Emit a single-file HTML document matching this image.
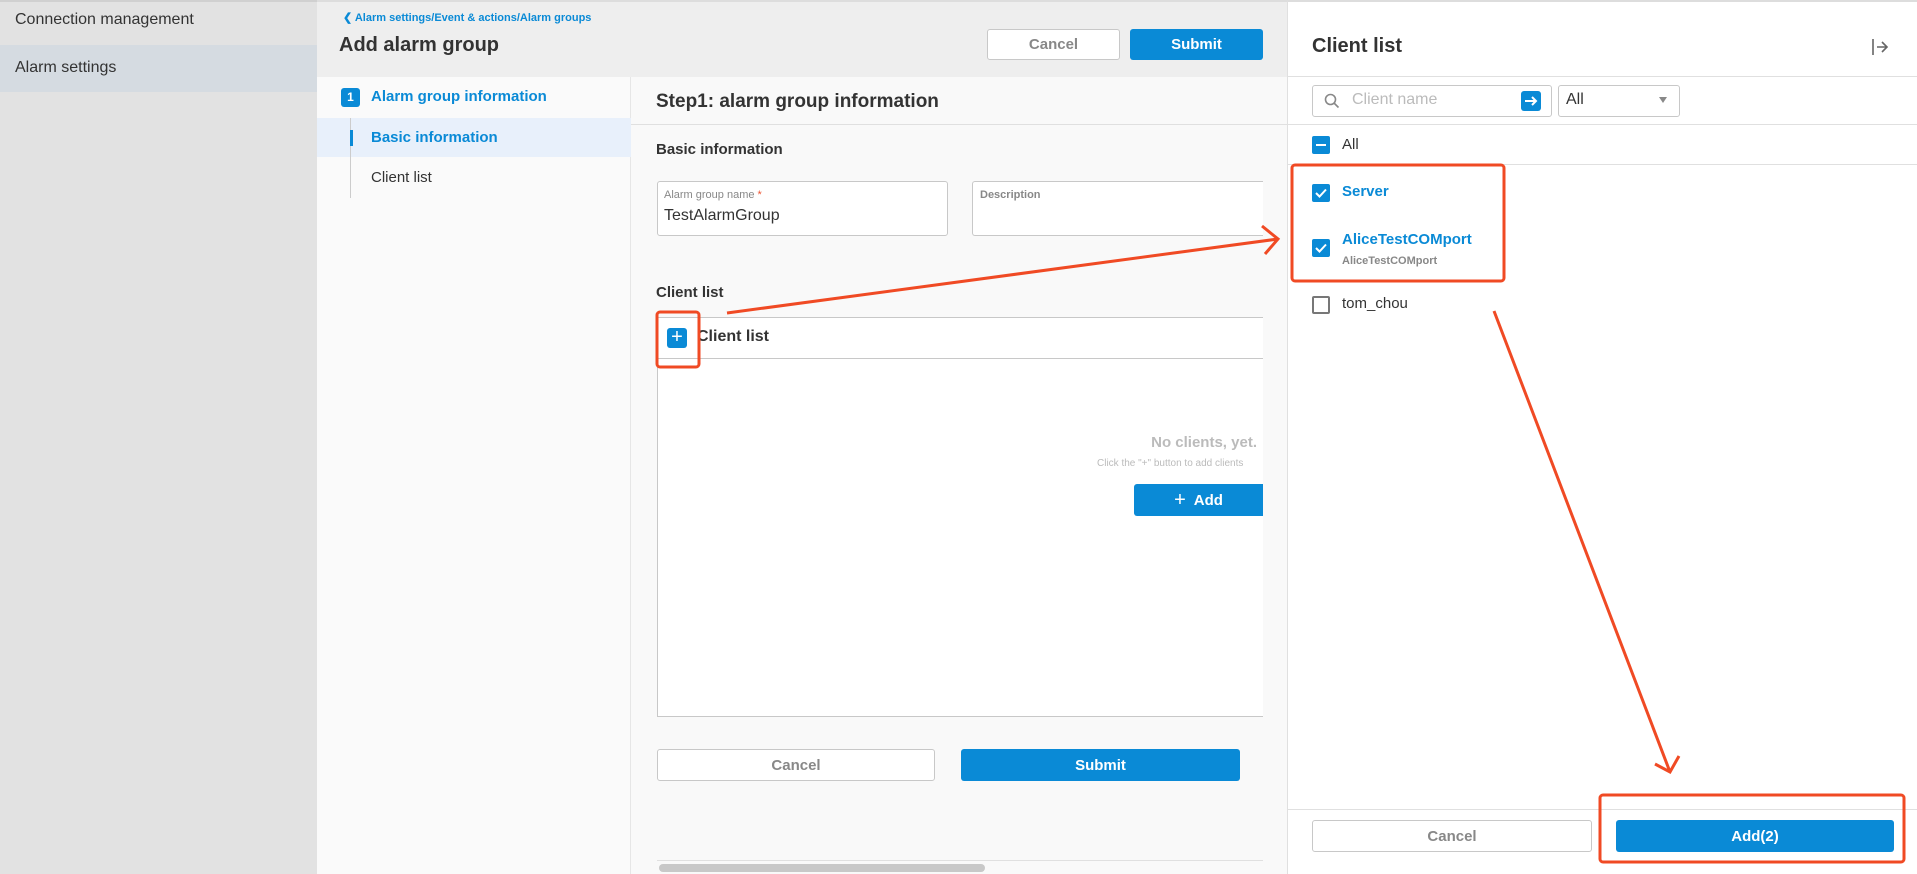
<!DOCTYPE html>
<html><head><meta charset="utf-8">
<style>
*{box-sizing:border-box;margin:0;padding:0}
body{width:1917px;height:874px;overflow:hidden;position:relative;font-family:"Liberation Sans",sans-serif;background:#f9f9f9;color:#333}
.abs{position:absolute}
.btn{position:absolute;border-radius:3px;font-size:15px;font-weight:bold;display:flex;align-items:center;justify-content:center}
.bw{background:#fff;border:1px solid #c8c8c8;color:#888}
.bb{background:#0a8ad6;color:#fff}
.cb{position:absolute;width:18px;height:18px;border-radius:2px;background:#0a8ad6}
</style></head><body>
<!-- sidebar -->
<div class="abs" style="left:0;top:0;width:317px;height:874px;background:#e2e2e2;border-top:2px solid #d0d0d0"></div>
<div class="abs" style="left:15px;top:11px;font-size:16px;color:#333">Connection management</div>
<div class="abs" style="left:0;top:45px;width:317px;height:47px;background:#d5dbe1"></div>
<div class="abs" style="left:15px;top:59px;font-size:16px;color:#333">Alarm settings</div>
<!-- header -->
<div class="abs" style="left:317px;top:0;width:970px;height:77px;background:#eeeeee;border-top:2px solid #ddd"></div>
<div class="abs" style="left:343px;top:11px;font-size:11px;font-weight:bold;color:#0a8ad6">&#10094; Alarm settings/Event &amp; actions/Alarm groups</div>
<div class="abs" style="left:339px;top:34px;font-size:20px;font-weight:bold;color:#333">Add alarm group</div>
<div class="btn bw" style="left:987px;top:29px;width:133px;height:31px">Cancel</div>
<div class="btn bb" style="left:1130px;top:29px;width:133px;height:31px">Submit</div>
<!-- steps -->
<div class="abs" style="left:317px;top:77px;width:314px;height:797px;background:#fafafa;border-right:1px solid #e6e6e6"></div>
<div class="abs" style="left:341px;top:88px;width:19px;height:19px;background:#0a8ad6;border-radius:3px;color:#fff;font-size:12px;font-weight:bold;text-align:center;line-height:19px">1</div>
<div class="abs" style="left:371px;top:88px;font-size:15px;font-weight:bold;color:#0a8ad6">Alarm group information</div>
<div class="abs" style="left:317px;top:118px;width:314px;height:39px;background:#e8f0fb"></div>
<div class="abs" style="left:350px;top:118px;width:1px;height:80px;background:#ccc"></div>
<div class="abs" style="left:350px;top:130px;width:3px;height:16px;background:#0a8ad6"></div>
<div class="abs" style="left:371px;top:129px;font-size:15px;font-weight:bold;color:#0a8ad6">Basic information</div>
<div class="abs" style="left:371px;top:169px;font-size:15px;color:#333">Client list</div>
<!-- content -->
<div class="abs" style="left:656px;top:91px;font-size:19px;font-weight:bold;color:#333">Step1: alarm group information</div>
<div class="abs" style="left:631px;top:124px;width:656px;height:1px;background:#e0e0e0"></div>
<div class="abs" style="left:656px;top:141px;font-size:15px;font-weight:bold;color:#333">Basic information</div>
<div class="abs" style="left:657px;top:181px;width:291px;height:55px;background:#fff;border:1px solid #c8c8c8;border-radius:3px"></div>
<div class="abs" style="left:664px;top:189px;font-size:11px;color:#888">Alarm group name <span style="color:#e53">*</span></div>
<div class="abs" style="left:664px;top:207px;font-size:16px;color:#333">TestAlarmGroup</div>
<div class="abs" style="left:972px;top:181px;width:291px;height:55px;background:#fff;border:1px solid #c8c8c8;border-right:none;border-radius:3px 0 0 3px"></div>
<div class="abs" style="left:980px;top:189px;font-size:11px;font-weight:bold;color:#888">Description</div>
<div class="abs" style="left:656px;top:284px;font-size:15px;font-weight:bold;color:#333">Client list</div>
<div class="abs" style="left:657px;top:317px;width:606px;height:400px;background:#fff;border:1px solid #c8c8c8;border-right:none"></div>
<div class="abs" style="left:657px;top:358px;width:606px;height:1px;background:#c8c8c8"></div>
<div class="abs" style="left:667px;top:328px;width:20px;height:20px;background:#0a8ad6;border-radius:3px;color:#fff;font-size:20px;line-height:19px;text-align:center">+</div>
<div class="abs" style="left:697px;top:328px;font-size:16px;font-weight:bold;color:#333">Client list</div>
<div class="abs" style="left:657px;top:434px;width:600px;text-align:right;font-size:15px;font-weight:bold;color:#bbb;overflow:hidden">No clients, yet.</div>
<div class="abs" style="left:1097px;top:458px;width:166px;font-size:10px;color:#bbb;white-space:nowrap;overflow:hidden">Click the "+" button to add clients</div>
<div class="btn bb" style="left:1134px;top:484px;width:129px;height:32px;border-radius:3px 0 0 3px"><span style="font-size:20px;font-weight:normal;margin-right:8px">+</span>Add</div>
<div class="btn bw" style="left:657px;top:749px;width:278px;height:32px">Cancel</div>
<div class="btn bb" style="left:961px;top:749px;width:279px;height:32px">Submit</div>
<div class="abs" style="left:657px;top:860px;width:606px;height:1px;background:#e0e0e0"></div>
<div class="abs" style="left:659px;top:864px;width:326px;height:8px;background:#c8c8c8;border-radius:4px"></div>
<!-- right panel -->
<div class="abs" style="left:1287px;top:0;width:630px;height:874px;background:#fff;border-left:1px solid #e0e0e0;border-top:2px solid #ddd"></div>
<div class="abs" style="left:1312px;top:35px;font-size:20px;font-weight:bold;color:#333">Client list</div>
<svg class="abs" style="left:1870px;top:37px" width="20" height="20" viewBox="0 0 20 20"><path d="M3 2v16M7 10h10M12 5l5 5-5 5" stroke="#666" stroke-width="1.6" fill="none"/></svg>
<div class="abs" style="left:1288px;top:76px;width:629px;height:1px;background:#e0e0e0"></div>
<div class="abs" style="left:1312px;top:85px;width:240px;height:32px;border:1px solid #c8c8c8;border-radius:3px"></div>
<svg class="abs" style="left:1323px;top:92px" width="18" height="18" viewBox="0 0 18 18"><circle cx="7.5" cy="7.5" r="5" stroke="#888" stroke-width="1.6" fill="none"/><path d="M11 11l4.5 4.5" stroke="#888" stroke-width="1.6"/></svg>
<div class="abs" style="left:1352px;top:91px;font-size:16px;color:#bbb">Client name</div>
<div class="abs" style="left:1521px;top:91px;width:20px;height:20px;background:#0a8ad6;border-radius:3px"></div>
<svg class="abs" style="left:1521px;top:91px" width="20" height="20" viewBox="0 0 20 20"><path d="M4 10h11M11 6l4 4-4 4" stroke="#fff" stroke-width="2" fill="none"/></svg>
<div class="abs" style="left:1558px;top:85px;width:122px;height:32px;border:1px solid #c8c8c8;border-radius:3px"></div>
<div class="abs" style="left:1566px;top:91px;font-size:16px;color:#333">All</div>
<div class="abs" style="left:1659px;top:97px;width:0;height:0;border-left:4px solid transparent;border-right:4px solid transparent;border-top:6px solid #888"></div>
<div class="abs" style="left:1288px;top:124px;width:629px;height:1px;background:#e0e0e0"></div>
<div class="cb" style="left:1312px;top:136px"></div><div class="abs" style="left:1316px;top:144px;width:10px;height:2px;background:#fff"></div>
<div class="abs" style="left:1342px;top:136px;font-size:15px;color:#333">All</div>
<div class="abs" style="left:1288px;top:164px;width:629px;height:1px;background:#e0e0e0"></div>
<div class="cb" style="left:1312px;top:184px"></div>
<svg class="abs" style="left:1312px;top:184px" width="18" height="18" viewBox="0 0 18 18"><path d="M4 9l3.5 3.5L14 5.5" stroke="#fff" stroke-width="2" fill="none"/></svg>
<div class="abs" style="left:1342px;top:183px;font-size:15px;font-weight:bold;color:#0a8ad6">Server</div>
<div class="cb" style="left:1312px;top:239px"></div>
<svg class="abs" style="left:1312px;top:239px" width="18" height="18" viewBox="0 0 18 18"><path d="M4 9l3.5 3.5L14 5.5" stroke="#fff" stroke-width="2" fill="none"/></svg>
<div class="abs" style="left:1342px;top:231px;font-size:15px;font-weight:bold;color:#0a8ad6">AliceTestCOMport</div>
<div class="abs" style="left:1342px;top:255px;font-size:11px;font-weight:bold;color:#888">AliceTestCOMport</div>
<div class="abs" style="left:1312px;top:296px;width:18px;height:18px;border:2px solid #777;border-radius:2px"></div>
<div class="abs" style="left:1342px;top:295px;font-size:15px;color:#333">tom_chou</div>
<div class="abs" style="left:1288px;top:809px;width:629px;height:1px;background:#e0e0e0"></div>
<div class="btn bw" style="left:1312px;top:820px;width:280px;height:32px">Cancel</div>
<div class="btn bb" style="left:1616px;top:820px;width:278px;height:32px">Add(2)</div>
<!-- annotations -->
<svg class="abs" style="left:0;top:0" width="1917" height="874">
<g fill="none" stroke="#f04a24" stroke-width="3">
<rect x="657" y="312" width="42" height="55" rx="3"/>
<rect x="1292" y="165" width="212" height="116" rx="3"/>
<rect x="1600" y="795" width="304" height="67" rx="3"/>
<path d="M727 313L1278 239M1262 226L1278 239L1265 254"/>
<path d="M1494 311L1670 772M1655 764L1670 772L1679 756"/>
</g></svg>
</body></html>
